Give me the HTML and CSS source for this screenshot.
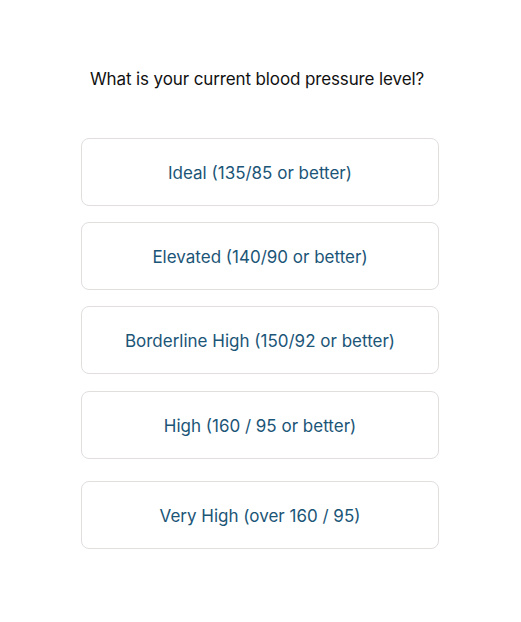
FILE: index.html
```html
<!DOCTYPE html>
<html lang="en">
<head>
<meta charset="utf-8">
<title>Blood pressure</title>
<link rel="stylesheet" href="styles.css">
</head>
<body>
<main class="quiz">
  <h1 class="question">What is your current blood pressure level?</h1>
  <div class="options">
    <button class="option">Ideal (135/85 or better)</button>
    <button class="option">Elevated (140/90 or better)</button>
    <button class="option">Borderline High (150/92 or better)</button>
    <button class="option option-nudge">High (160 / 95 or better)</button>
    <button class="option option-last">Very High (over 160 / 95)</button>
  </div>
</main>
</body>
</html>
```
FILE: styles.css
```css
html, body {
  margin: 0;
  padding: 0;
  background: #ffffff;
}
body {
  font-family: Inter, "Open Sans", "Liberation Sans", sans-serif;
}
.quiz {
  width: 358px;
  margin: 0 82px 0 81px;
  padding-top: 66px;
  display: flex;
  flex-direction: column;
}
.question {
  margin: 0;
  padding-right: 6px;
  font-size: 17px;
  font-weight: 400;
  letter-spacing: -0.12px;
  line-height: 26px;
  color: #111111;
  text-align: center;
}
.options {
  margin-top: 46px;
  display: flex;
  flex-direction: column;
  gap: 16px;
}
.option {
  box-sizing: border-box;
  height: 68px;
  width: 100%;
  background: #ffffff;
  border: 1px solid #e2dede;
  border-radius: 8px;
  font-family: inherit;
  font-size: 17px;
  font-weight: 400;
  color: #1b5577;
  text-align: center;
  padding: 2px 0 0;
}
.option-nudge {
  margin-top: 1px;
}
.option-last {
  margin-top: 6px;
}
```
